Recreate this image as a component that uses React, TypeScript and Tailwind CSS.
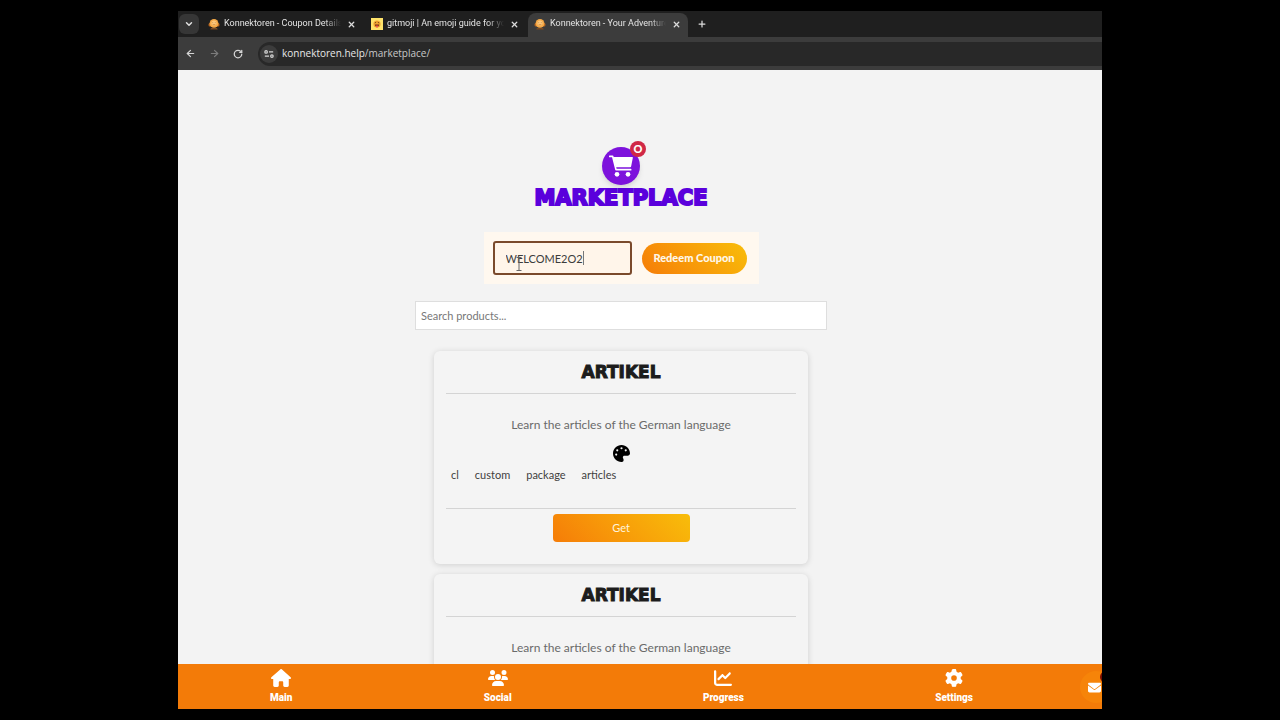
import React, { useState } from "react";
import { ArrowLeft, ArrowRight, ChevronDown, Plus, RotateCw, X } from "lucide-react";
import {
  FaChartLine,
  FaEnvelope,
  FaGear,
  FaHouse,
  FaPalette,
  FaUsers,
} from "react-icons/fa6";

const KonnektorenIcon = () => (
  <svg viewBox="0 0 12 12" className="h-3 w-3 shrink-0" aria-hidden="true">
    <rect x="0.5" y="5" width="11" height="3.5" rx="1.5" fill="#b8651f" />
    <path d="M3 10h6l.8 1.6H2.2z" fill="#7a4a22" />
    <circle cx="6" cy="5.4" r="4.4" fill="#f5a947" />
    <circle cx="6" cy="5" r="2.6" fill="#fbc67a" />
    <circle cx="4.8" cy="4.6" r="0.4" fill="#a8682c" />
    <circle cx="7.2" cy="4.6" r="0.4" fill="#a8682c" />
    <path d="M4.6 6.3q1.4 1.1 2.8 0" stroke="#b8722f" strokeWidth="0.6" fill="none" />
  </svg>
);

const GitmojiIcon = () => (
  <svg viewBox="0 0 12 12" className="h-3 w-3 shrink-0" aria-hidden="true">
    <rect width="12" height="12" fill="#ffe36b" />
    <circle cx="6" cy="6" r="3.6" fill="#f2a531" />
    <path d="M3.8 5l1.4-.8M8.2 5l-1.4-.8" stroke="#5b3512" strokeWidth="0.8" />
    <path d="M3.8 6.4h4.4q-.3 2.4-2.2 2.4T3.8 6.4z" fill="#6b2d12" />
    <path d="M5 7.6h2v1.6q-1 .8-2 0z" fill="#ef5a4c" />
  </svg>
);

const SiteInfoIcon = () => (
  <svg viewBox="0 0 12 12" className="h-[10px] w-[10px]" fill="none" stroke="#d6d6d6" strokeWidth="1.5" aria-hidden="true">
    <circle cx="2.5" cy="3.5" r="1.5" />
    <path d="M6 3.5h5M1 8.5h5" />
    <circle cx="9.5" cy="8.5" r="1.5" />
  </svg>
);

const CartIcon = () => (
  <svg viewBox="0 0 72 66" className="h-[22px] w-6" aria-hidden="true">
    <path d="M2 4h9l10 40h44" fill="none" stroke="white" strokeWidth="5" strokeLinecap="round" strokeLinejoin="round" />
    <path d="M12 6h58q2 0 1.500 2l-5 26q-.5 3-3 3H20z" fill="white" />
    <circle cx="24" cy="58" r="7" fill="white" />
    <circle cx="57" cy="58" r="7" fill="white" />
  </svg>
);

type TabProps = {
  title: string;
  icon: React.ReactNode;
  active?: boolean;
};

const Tab: React.FC<TabProps> = ({ title, icon, active }) => {
  return (
    <div
      className={
        active
          ? "flex h-6 w-40 items-center gap-1 rounded-t-lg bg-[#3c3c3c] pb-[2px] pl-[6px] pr-[6px]"
          : "flex h-6 w-[163px] items-center gap-1 pb-[2px] pl-[6px] pr-2"
      }
    >
      {icon}
      <span className="flex-1 overflow-hidden whitespace-nowrap font-['Roboto',sans-serif] text-[9px] text-[#e4e4e4] [mask-image:linear-gradient(to_right,black_86%,transparent)]">
        {title}
      </span>
      <button type="button" aria-label="Close tab" className="flex h-4 w-3 items-center justify-center text-[#dcdcdc]">
        <X className="h-[9px] w-[9px]" strokeWidth={3.5} />
      </button>
    </div>
  );
};

const Browser = () => {
  return (
    <header className="shrink-0 font-['Open_Sans',sans-serif]">
      <div className="flex h-[26px] items-end bg-[#1f1f1f]">
        <button
          type="button"
          aria-label="Search tabs"
          className="mb-[3px] ml-[1px] mr-[3px] flex h-5 w-5 items-center justify-center rounded-md bg-[#363636] text-[#e0e0e0]"
        >
          <ChevronDown className="h-[10px] w-[10px]" strokeWidth={3.5} />
        </button>
        <Tab title="Konnektoren - Coupon Details" icon={<KonnektorenIcon />} />
        <Tab title="gitmoji | An emoji guide for your" icon={<GitmojiIcon />} />
        <Tab title="Konnektoren - Your Adventure" icon={<KonnektorenIcon />} active />
        <button type="button" aria-label="New tab" className="ml-1 flex h-6 w-5 items-center justify-center pb-[2px] text-[#dcdcdc]">
          <Plus className="h-[10px] w-[10px]" strokeWidth={3} />
        </button>
      </div>
      <div className="flex h-[33px] items-center bg-[#3c3c3c]">
        <button type="button" aria-label="Back" className="flex w-6 justify-center text-[#d6d6d6]">
          <ArrowLeft className="h-[11px] w-[11px]" strokeWidth={2.5} />
        </button>
        <button type="button" aria-label="Forward" className="flex w-6 justify-center text-[#7c7c7c]">
          <ArrowRight className="h-[11px] w-[11px]" strokeWidth={2.5} />
        </button>
        <button type="button" aria-label="Reload" className="flex w-6 justify-center text-[#d6d6d6]">
          <RotateCw className="h-[10px] w-[10px]" strokeWidth={3} />
        </button>
        <div className="ml-2 flex h-6 flex-1 items-center rounded-l-full bg-[#282828] pl-[2px]">
          <span className="flex h-[18px] w-[18px] items-center justify-center rounded-full bg-[#3c3c3c]">
            <SiteInfoIcon />
          </span>
          <span className="ml-1 text-[10px] text-[#c8c8c8]">
            <span className="text-[#e8e8e8]">konnektoren.help</span>/marketplace/
          </span>
        </div>
      </div>
    </header>
  );
};

const CouponForm = () => {
  const [code, setCode] = useState("WELCOME2O2");

  return (
    <form
      className="mx-auto mt-[21px] flex w-[275px] items-center gap-[10px] bg-[#fff8ef] py-[9px] pl-[9px] pr-3"
      onSubmit={(e) => e.preventDefault()}
    >
      <div className="relative">
        <input
          aria-label="Coupon code"
          value={code}
          onChange={(e) => setCode(e.target.value)}
          className="block h-[34px] w-[139px] rounded-[3px] border-2 border-[#7a4a2c] bg-[#fff5ea] px-[11px] text-[11px] text-[#3c3c3c] outline-none"
        />
        {/* text caret and I-beam pointer */}
        <span className="absolute left-[90px] top-[10px] h-[14px] w-px bg-[#777]" />
        <svg
          viewBox="0 0 8 14"
          className="absolute left-[22px] top-[16px] h-[14px] w-2"
          fill="none"
          stroke="#666"
          aria-hidden="true"
        >
          <path d="M1.5 .5h5M4 .5v13M1.5 13.5h5" />
        </svg>
      </div>
      <button
        type="submit"
        className="h-[31px] flex-1 whitespace-nowrap rounded-full bg-linear-45 from-[#f57c08] to-[#f8bd0a] text-[11px] font-black text-[#fff8ea]"
      >
        Redeem Coupon
      </button>
    </form>
  );
};

type ProductCardProps = {
  title: string;
  description: string;
  tags: string[];
};

const ProductCard: React.FC<ProductCardProps> = ({ title, description, tags }) => {
  return (
    <article className="rounded-md bg-[#f4f4f4] px-3 pb-[22px] pt-[9px] shadow-[0_1px_6px_rgba(0,0,0,0.15)]">
      <h2 className="border-b border-[#d4d4d4] pb-[9px] text-center font-['DejaVu_Sans',sans-serif] text-[17px] font-bold leading-6 text-[#1c1c1c] [-webkit-text-stroke:1px_#1c1c1c]">
        {title}
      </h2>
      <p className="mt-[21px] text-center text-xs leading-5 text-[#6a6a6a]">{description}</p>
      <FaPalette className="mx-auto mt-[10px] h-[17px] w-[17px] text-black" />
      <ul className="mt-1 flex gap-4 px-[5px] text-[11px] leading-[18px] text-[#3f3f3f]">
        {tags.map((tag) => (
          <li key={tag}>{tag}</li>
        ))}
      </ul>
      <div className="mt-6 border-t border-[#d4d4d4] pt-[5px]">
        <button
          type="button"
          className="mx-auto block h-7 w-[137px] rounded bg-linear-45 from-[#f57c08] to-[#f8bd0a] text-[11px] text-[#fff4dc]"
        >
          Get
        </button>
      </div>
    </article>
  );
};

const tags = ["cl", "custom", "package", "articles"];

const products = [
  { id: 1, title: "ARTIKEL", description: "Learn the articles of the German language", tags },
  { id: 2, title: "ARTIKEL", description: "Learn the articles of the German language", tags },
];

const Marketplace = () => {
  return (
    <main className="min-h-0 flex-1 overflow-hidden bg-[#f3f3f3] pr-[38px] pt-[77px]">
      <div className="relative mx-auto flex h-[38px] w-[38px] items-center justify-center rounded-full bg-[#7d12dc] shadow-md">
        <CartIcon />
        <span className="absolute -right-[6px] -top-[6px] flex h-4 w-4 items-center justify-center rounded-full bg-[#d02846] text-[11px] font-black text-white">
          O
        </span>
      </div>
      <h1 className="text-center font-['DejaVu_Sans',sans-serif] text-[21px] font-bold leading-[26px] text-[#5a00dc] [-webkit-text-stroke:2px_#5a00dc]">
        MARKETPLACE
      </h1>
      <CouponForm />
      <input
        type="search"
        aria-label="Search products"
        placeholder="Search products..."
        className="mx-auto mt-[17px] block h-[29px] w-full max-w-[412px] border border-[#dedede] bg-white px-[5px] text-[11px] outline-none placeholder:text-[#777]"
      />
      <div className="mx-auto mt-[21px] flex max-w-[374px] flex-col gap-[10px]">
        {products.map(({ id, ...product }) => (
          <ProductCard key={id} {...product} />
        ))}
      </div>
    </main>
  );
};

const links = [
  { label: "Main", icon: FaHouse },
  { label: "Social", icon: FaUsers },
  { label: "Progress", icon: FaChartLine },
  { label: "Settings", icon: FaGear },
];

const BottomNav = () => {
  return (
    <nav className="relative flex h-[45px] shrink-0 justify-between overflow-hidden bg-[#f37b08] pl-[92px] pr-[129px]">
      {links.map(({ label, icon: Icon }) => (
        <a
          key={label}
          href="#"
          className="flex flex-col items-center pt-[5px] font-['Roboto',sans-serif] text-[10px] font-black leading-[14px] text-white"
        >
          <Icon className="mb-1 h-[18px] w-5" />
          {label}
        </a>
      ))}
      <button
        type="button"
        aria-label="Messages"
        className="absolute -right-[10px] top-[7px] flex h-8 w-8 items-center rounded-full bg-[#f68409] pl-2 text-white"
      >
        <FaEnvelope className="h-[13px] w-[13px]" />
        <span className="absolute left-5 top-0 h-3 w-3 rounded-full bg-[#7a0c00]" />
      </button>
    </nav>
  );
};

export default function App() {
  return (
    <div className="flex h-screen flex-col bg-black px-[178px] py-[11px] font-['Lato',sans-serif]">
      <Browser />
      <Marketplace />
      <BottomNav />
    </div>
  );
}
